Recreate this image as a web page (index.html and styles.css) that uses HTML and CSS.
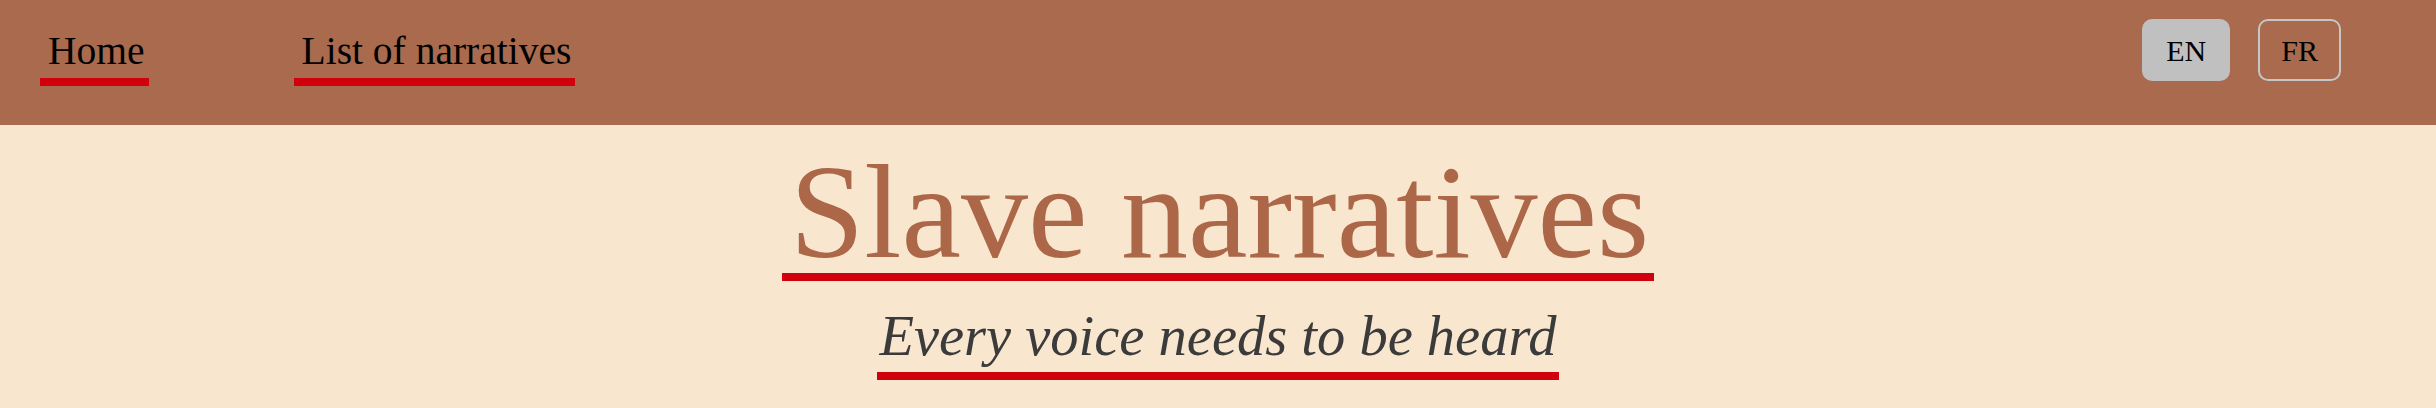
FILE: index.html
```html
<!DOCTYPE html>
<html lang="en">
<head>
<meta charset="utf-8">
<title>Slave narratives</title>
<link rel="stylesheet" href="styles.css">
</head>
<body>
<header class="topbar">
  <nav class="nav">
    <a class="nav-link" href="#">Home</a>
    <a class="nav-link" href="#">List of narratives</a>
  </nav>
  <div class="langs">
    <button class="lang lang-active" type="button">EN</button>
    <button class="lang" type="button">FR</button>
  </div>
</header>
<main class="hero">
  <h1 class="title"><span class="title-text">Slave narratives</span></h1>
  <p class="tagline"><span class="tagline-text">Every voice needs to be heard</span></p>
</main>
</body>
</html>
```

FILE: styles.css
```css
* { box-sizing: border-box; }

html, body {
  margin: 0;
  padding: 0;
}

body {
  background: #f8e6ce;
  font-family: "Liberation Serif", "Times New Roman", serif;
  height: 408px;
  overflow: hidden;
}

.topbar {
  height: 125px;
  background: #a96a4e;
  display: flex;
  justify-content: space-between;
  align-items: flex-start;
  padding: 0 95px 0 40px;
}

.nav {
  display: flex;
  gap: 145px;
  padding-top: 29px;
}

.nav-link {
  display: inline-block;
  font-size: 39.5px;
  line-height: 44px;
  color: #000;
  text-decoration: none;
  padding: 0 4px 5px 8px;
  border-bottom: 8px solid #d0000d;
}

.langs {
  display: flex;
  gap: 28px;
  padding-top: 19px;
}

.lang {
  font-family: "Liberation Serif", "Times New Roman", serif;
  font-size: 30px;
  height: 62px;
  line-height: 56px;
  padding: 2px 21px 0;
  border: 2px solid #c6c6c6;
  border-radius: 10px;
  background: transparent;
  color: #000;
}

.lang-active {
  background: #c0c0c0;
  border-color: #c0c0c0;
  padding: 2px 22px 0;
}

.hero {
  text-align: center;
}

.title {
  margin: 27px 0 0;
  font-weight: normal;
  font-size: 134px;
  line-height: 120px;
  color: #ab6748;
}

.title-text {
  display: inline-block;
  padding: 0 5px 1px 8px;
  border-bottom: 8px solid #d0000d;
}

.tagline {
  margin: 19px 0 0;
  font-style: italic;
  font-size: 56.5px;
  line-height: 72px;
  color: #3b3b3b;
}

.tagline-text {
  display: inline-block;
  padding: 0 2px;
  border-bottom: 8px solid #d0000d;
}
```
